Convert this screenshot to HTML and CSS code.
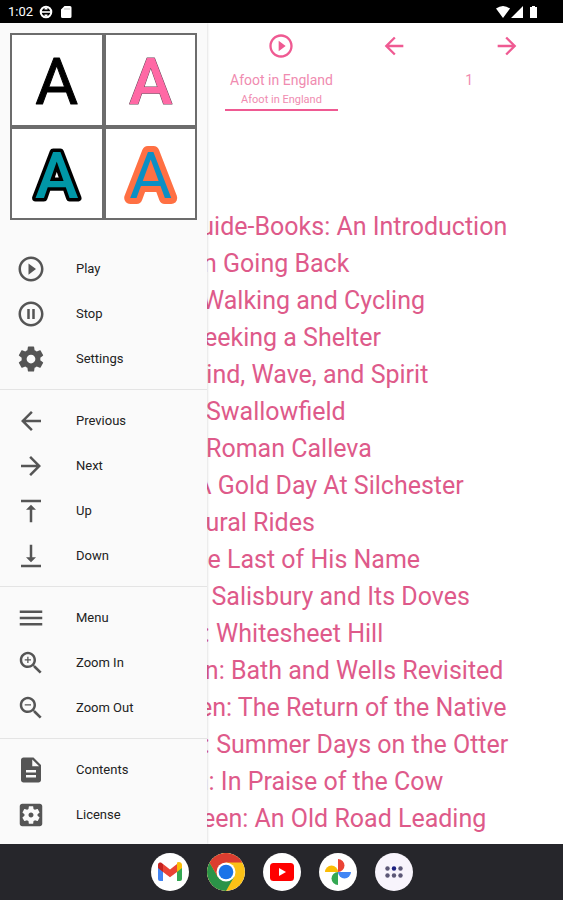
FILE: index.html
```html
<!DOCTYPE html>
<html lang="en">

  <head>
    <meta charset="utf-8">
    <meta name="viewport" content="width=device-width, initial-scale=1">
    <title>Afoot in England</title>
    <link rel="stylesheet" href="styles.css">
  </head>

  <body>
    <header class="status">
      <span class="time">1:02</span>
      <svg class="status-icon" viewBox="0 0 14 14"><circle cx="7" cy="7" r="5.300" fill="none" stroke="#fff" stroke-width="2"/><path d="M2 7h10" stroke="#fff" stroke-width="1.600"/><path d="M5.500 2.500h3v2h-3zM5.500 9.500h3v2h-3z" fill="#fff"/></svg>
      <svg class="status-icon" viewBox="0 0 14 14"><path d="M5.500 1H11a1.500 1.500 0 0 1 1.500 1.500v9A1.500 1.500 0 0 1 11 13H3.500A1.500 1.500 0 0 1 2 11.500V4.500z" fill="#fff"/><path d="M6 3v2M8 3v2M10 3v2" stroke="#888" stroke-width=".6"/></svg>
      <svg class="signals" viewBox="0 0 44 14"><path d="M1 3.500q7-5 14 0L8 13zM16 13 28 1v12zM35 2h2V1h3v1h2v11h-7z" fill="#fff"/></svg>
    </header>

    <div class="app">
      <main class="reader">
        <div class="toolbar">
          <button class="tool play" type="button" aria-label="Play"><svg viewBox="0 0 24 24"><path d="M10 16.500l6-4.500-6-4.500v9zM12 2C6.480 2 2 6.480 2 12s4.480 10 10 10 10-4.480 10-10S17.520 2 12 2zm0 18c-4.410 0-8-3.590-8-8s3.590-8 8-8 8 3.590 8 8-3.590 8-8 8z"/></svg></button>
          <button class="tool" type="button" aria-label="Previous"><svg viewBox="0 0 24 24"><path d="M20 11H7.830l5.590-5.590L12 4l-8 8 8 8 1.410-1.410L7.830 13H20v-2z"/></svg></button>
          <button class="tool" type="button" aria-label="Next"><svg viewBox="0 0 24 24"><path d="M12 4l-1.410 1.410L16.170 11H4v2h12.170l-5.580 5.590L12 20l8-8z"/></svg></button>
        </div>
        <div class="place">
          <a class="book" href="#contents">
            <span class="book-title">Afoot in England</span>
            <span class="book-part">Afoot in England</span>
          </a>
          <span class="page">1</span>
        </div>

        <ul class="chapters" id="contents">
          <li><a href="#1">Chapter One: Guide-Books: An Introduction</a></li>
          <li><a href="#2">Chapter Two: On Going Back</a></li>
          <li><a href="#3">Chapter Three: Walking and Cycling</a></li>
          <li><a href="#4">Chapter Four: Seeking a Shelter</a></li>
          <li><a href="#5">Chapter Five: Wind, Wave, and Spirit</a></li>
          <li><a href="#6">Chapter Six: By Swallowfield</a></li>
          <li><a href="#7">Chapter Seven: Roman Calleva</a></li>
          <li><a href="#8">Chapter Eight: A Gold Day At Silchester</a></li>
          <li><a href="#9">Chapter Nine: Rural Rides</a></li>
          <li><a href="#10">Chapter Ten: The Last of His Name</a></li>
          <li><a href="#11">Chapter Eleven: Salisbury and Its Doves</a></li>
          <li><a href="#12">Chapter Twelve: Whitesheet Hill</a></li>
          <li><a href="#13">Chapter Thirteen: Bath and Wells Revisited</a></li>
          <li><a href="#14">Chapter Fourteen: The Return of the Native</a></li>
          <li><a href="#15">Chapter Fifteen: Summer Days on the Otter</a></li>
          <li><a href="#16">Chapter Sixteen: In Praise of the Cow</a></li>
          <li><a href="#17">Chapter Seventeen: An Old Road Leading</a></li>
        </ul>
      </main>

      <aside class="drawer">
        <div class="themes">
          <button class="theme" type="button" aria-label="Black text"><svg viewBox="0 0 90 90"><text class="letter plain" x="45" y="69">A</text></svg></button>
          <button class="theme" type="button" aria-label="Pink text"><svg viewBox="0 0 90 90"><text class="letter pink" x="45" y="69">A</text></svg></button>
          <button class="theme" type="button" aria-label="Teal text, black outline"><svg viewBox="0 0 90 90"><text class="letter teal" x="45" y="69">A</text></svg></button>
          <button class="theme" type="button" aria-label="Blue text, orange outline"><svg viewBox="0 0 90 90"><text class="letter orange" x="45" y="69">A</text></svg></button>
        </div>

        <nav>
          <div class="group">
            <button class="item" type="button"><svg viewBox="0 0 24 24"><path d="M10 16.500l6-4.500-6-4.500v9zM12 2C6.480 2 2 6.480 2 12s4.480 10 10 10 10-4.480 10-10S17.520 2 12 2zm0 18c-4.410 0-8-3.590-8-8s3.590-8 8-8 8 3.590 8 8-3.590 8-8 8z"/></svg>Play</button>
            <button class="item" type="button"><svg viewBox="0 0 24 24"><path d="M9 16h2V8H9v8zm3-14C6.480 2 2 6.480 2 12s4.480 10 10 10 10-4.480 10-10S17.520 2 12 2zm0 18c-4.410 0-8-3.590-8-8s3.590-8 8-8 8 3.590 8 8-3.590 8-8 8zm1-4h2V8h-2v8z"/></svg>Stop</button>
            <button class="item" type="button"><svg viewBox="0 0 24 24"><path d="M19.430 12.980c.04-.32.07-.64.07-.98s-.03-.66-.07-.98l2.110-1.650c.19-.15.24-.42.12-.64l-2-3.460c-.12-.22-.39-.3-.61-.22l-2.490 1c-.52-.4-1.080-.73-1.690-.98l-.38-2.650C14.460 2.180 14.250 2 14 2h-4c-.25 0-.46.18-.49.42l-.38 2.650c-.61.25-1.170.59-1.690.98l-2.490-1c-.23-.09-.49 0-.61.22l-2 3.460c-.13.22-.07.49.12.64l2.110 1.650c-.04.32-.07.65-.07.98s.03.66.07.98l-2.110 1.650c-.19.15-.24.42-.12.64l2 3.460c.12.22.39.3.61.22l2.490-1c.52.4 1.080.73 1.690.98l.38 2.650c.03.24.24.42.49.42h4c.25 0 .46-.18.49-.42l.38-2.650c.61-.25 1.170-.59 1.690-.98l2.490 1c.23.09.49 0 .61-.22l2-3.460c.12-.22.07-.49-.12-.64l-2.110-1.650zM12 15.500c-1.930 0-3.500-1.570-3.500-3.500s1.570-3.500 3.500-3.500 3.500 1.570 3.500 3.500-1.570 3.500-3.500 3.500z"/></svg>Settings</button>
          </div>
          <div class="group">
            <button class="item" type="button"><svg viewBox="0 0 24 24"><path d="M20 11H7.830l5.590-5.590L12 4l-8 8 8 8 1.410-1.410L7.830 13H20v-2z"/></svg>Previous</button>
            <button class="item" type="button"><svg viewBox="0 0 24 24"><path d="M12 4l-1.410 1.410L16.170 11H4v2h12.170l-5.580 5.590L12 20l8-8z"/></svg>Next</button>
            <button class="item" type="button"><svg viewBox="0 0 24 24"><path d="M8 11h3v10h2V11h3l-4-4-4 4zM4 3v2h16V3H4z"/></svg>Up</button>
            <button class="item" type="button"><svg viewBox="0 0 24 24"><path d="M16 13h-3V3h-2v10H8l4 4 4-4zM4 19v2h16v-2H4z"/></svg>Down</button>
          </div>
          <div class="group">
            <button class="item" type="button"><svg viewBox="0 0 24 24"><path d="M3 18h18v-2H3v2zm0-5h18v-2H3v2zm0-7v2h18V6H3z"/></svg>Menu</button>
            <button class="item" type="button"><svg viewBox="0 0 24 24"><path d="M15.500 14h-.79l-.28-.27C15.410 12.590 16 11.110 16 9.500 16 5.910 13.090 3 9.500 3S3 5.910 3 9.500 5.910 16 9.500 16c1.610 0 3.090-.59 4.230-1.570l.27.28v.79l5 4.990L20.490 19l-4.990-5zm-6 0C7.010 14 5 11.990 5 9.500S7.010 5 9.500 5 14 7.010 14 9.500 11.990 14 9.500 14zm2.500-4h-2v2H9v-2H7V9h2V7h1v2h2v1z"/></svg>Zoom In</button>
            <button class="item" type="button"><svg viewBox="0 0 24 24"><path d="M15.500 14h-.79l-.28-.27C15.410 12.590 16 11.110 16 9.500 16 5.910 13.090 3 9.500 3S3 5.910 3 9.500 5.910 16 9.500 16c1.610 0 3.090-.59 4.230-1.570l.27.28v.79l5 4.990L20.490 19l-4.990-5zm-6 0C7.010 14 5 11.990 5 9.500S7.010 5 9.500 5 14 7.010 14 9.500 11.990 14 9.500 14zM7 9h5v1H7z"/></svg>Zoom Out</button>
          </div>
          <div class="group">
            <button class="item" type="button"><svg viewBox="0 0 24 24"><path d="M14 2H6c-1.100 0-1.990.9-1.990 2L4 20c0 1.100.89 2 1.990 2H18c1.100 0 2-.9 2-2V8l-6-6zm2 16H8v-2h8v2zm0-4H8v-2h8v2zm-3-5V3.500L18.500 9H13z"/></svg>Contents</button>
            <button class="item" type="button"><svg viewBox="0 0 24 24"><path d="M12 10c-1.100 0-2 .9-2 2s.9 2 2 2 2-.9 2-2-.9-2-2-2zm7-7H5c-1.110 0-2 .9-2 2v14c0 1.100.89 2 2 2h14c1.110 0 2-.9 2-2V5c0-1.100-.89-2-2-2zm-1.750 9c0 .23-.02.46-.05.68l1.480 1.160c.13.11.17.3.08.45l-1.400 2.420c-.09.15-.27.21-.43.15l-1.740-.7c-.36.28-.76.51-1.180.69l-.26 1.850c-.03.17-.18.3-.35.3h-2.800c-.17 0-.32-.13-.35-.29l-.26-1.850c-.43-.18-.82-.41-1.180-.69l-1.740.7c-.16.06-.34 0-.43-.15l-1.400-2.420c-.09-.15-.05-.34.08-.45l1.480-1.160c-.03-.23-.05-.46-.05-.69s.02-.46.05-.68l-1.480-1.160c-.13-.11-.17-.3-.08-.45l1.400-2.420c.09-.15.27-.21.43-.15l1.740.7c.36-.28.76-.51 1.180-.69l.26-1.850c.03-.17.18-.3.35-.3h2.800c.17 0 .32.13.35.29l.26 1.850c.43.18.82.41 1.180.69l1.740-.7c.16-.06.34 0 .43.15l1.400 2.420c.09.15.05.34-.08.45l-1.480 1.160c.03.23.05.46.05.69z"/></svg>License</button>
          </div>
        </nav>
      </aside>
    </div>

    <footer class="shelf">
      <button class="launcher" type="button" aria-label="Gmail"><svg viewBox="0 0 38 38"><path d="M7 12v14a2 2 0 0 0 2 2h3V15z" fill="#4285f4"/><path d="M31 12v14a2 2 0 0 1-2 2h-3V15z" fill="#34a853"/><path d="M26 12v7l5-4v-3c0-2.500-3-4-5-2.400z" fill="#fbbc04"/><path d="M7 12v3l5 4v-8l-2-1.400C8 9 7 10 7 12z" fill="#c5221f"/><path d="m12 11 7 5.500 7-5.500v8l-7 5.300-7-5.300z" fill="#ea4335"/></svg></button>
      <button class="launcher" type="button" aria-label="Chrome"><svg viewBox="0 0 38 38"><circle cx="19" cy="19" r="19" fill="#fbc116"/><path d="M2.500 9.500A19 19 0 0 0 19 38l8.200-14.250L19 19l-8.200 4.750z" fill="#2b9348"/><path d="M2.500 9.500a19 19 0 0 1 33 0H19V19l-8.200 4.750z" fill="#db3d30"/><circle cx="19" cy="19" r="9.500" fill="#fff"/><circle cx="19" cy="19" r="7.300" fill="#1a73e8"/></svg></button>
      <button class="launcher" type="button" aria-label="YouTube"><svg viewBox="0 0 38 38"><rect x="7" y="10" width="24" height="18" rx="3.500" fill="#f00"/><path d="m16 15 7 4-7 4z" fill="#fff"/></svg></button>
      <button class="launcher" type="button" aria-label="Photos"><svg viewBox="0 0 38 38"><path d="M19 19V6a6.500 6.500 0 0 1 0 13z" fill="#ea4335"/><path d="M19 19h13a6.500 6.500 0 0 1-13 0z" fill="#4285f4"/><path d="M19 19v13a6.500 6.500 0 0 1 0-13z" fill="#34a853"/><path d="M19 19H6a6.500 6.500 0 0 1 13 0z" fill="#fbbc04"/></svg></button>
      <button class="launcher apps" type="button" aria-label="All apps"><svg viewBox="0 0 38 38"><g fill="#5c5776"><circle cx="12.500" cy="15.500" r="2.200"/><circle cx="19" cy="15.500" r="2.200" fill="#1c2080"/><circle cx="25.500" cy="15.500" r="2.200"/><circle cx="12.500" cy="22.500" r="2.200"/><circle cx="19" cy="22.500" r="2.200"/><circle cx="25.500" cy="22.500" r="2.200"/></g></svg></button>
    </footer>
  </body>

</html>
```
FILE: styles.css
```css
:root {
  --pink: #ef5a92;
  --text-pink: #de5a8a;
  --icon: #555;
  --line: #e4e4e4;
  --drawer: #fafafa;
}

* {
  box-sizing: border-box;
}

body {
  margin: 0;
  height: 100vh;
  display: flex;
  flex-direction: column;
  background: #fff;
  font-family: Roboto, "Liberation Sans", sans-serif;
}

button {
  border: 0;
  padding: 0;
  background: none;
  font: inherit;
  cursor: pointer;
}

a {
  color: inherit;
  text-decoration: none;
}

svg {
  display: block;
}

.status {
  flex: none;
  display: flex;
  align-items: center;
  gap: 6px;
  height: 23px;
  padding: 0 24px 0 8px;
  background: #000;
  color: #fff;
}

.time {
  font-size: 13px;
}

.status-icon {
  width: 14px;
  height: 14px;
}

.signals {
  width: 44px;
  height: 14px;
  margin-left: auto;
}

.app {
  position: relative;
  flex: 1;
  min-height: 0;
  overflow: hidden;
}

.toolbar {
  display: grid;
  grid-template-columns: repeat(5, 1fr);
  height: 46px;
}

.tool {
  display: flex;
  align-items: center;
  justify-content: center;
}

.play {
  grid-column: 3;
}

.tool svg {
  width: 28px;
  height: 28px;
  fill: var(--pink);
}

.place {
  display: grid;
  grid-template-columns: repeat(3, 1fr);
  justify-items: center;
  color: #f08bb0;
  font-size: 14px;
  line-height: 22px;
}

.book {
  grid-column: 2;
  width: 60%;
  display: flex;
  flex-direction: column;
  align-items: center;
  white-space: nowrap;
  border-bottom: 2px solid var(--pink);
}

.book-part {
  font-size: 11px;
  line-height: 18px;
}

.chapters {
  list-style: none;
  margin: 0;
  padding: 97px 0 0 33px;
  color: var(--text-pink);
  font-size: 25px;
  line-height: 37px;
  white-space: nowrap;
}

/* slides over the reader */
.drawer {
  position: absolute;
  top: 0;
  bottom: 0;
  left: 0;
  width: 207px;
  padding: 10px 10px 0;
  overflow: hidden auto;
  background: var(--drawer);
  box-shadow: 0 0 3px rgba(0, 0, 0, 0.2);
  scrollbar-width: none;
}

.themes {
  display: grid;
  grid-template-columns: 1fr 1fr;
  margin-bottom: 18px;
}

.theme {
  border: 2px solid #6c6c6c;
  background: #fff;
}

.letter {
  font-size: 66px;
  text-anchor: middle;
  paint-order: stroke;
  stroke-linejoin: round;
}

.plain {
  stroke: #000;
  stroke-width: 1px;
}

.pink {
  fill: #ff69a5;
  font-weight: 500;
  stroke: #6b4458;
  stroke-width: 1px;
}

.teal {
  fill: #0097a7;
  font-weight: 500;
  stroke: #000;
  stroke-width: 7px;
}

.orange {
  fill: #0b8fc4;
  stroke: #ff7043;
  stroke-width: 12px;
}

.group {
  margin: 0 -10px;
  padding: 8px 16px;
}

.group + .group {
  border-top: 1px solid var(--line);
}

.item {
  display: flex;
  align-items: center;
  gap: 30px;
  width: 100%;
  height: 45px;
  color: #222;
  font-size: 13px;
}

.item svg {
  width: 30px;
  height: 30px;
  fill: var(--icon);
}

.shelf {
  flex: none;
  display: flex;
  align-items: center;
  justify-content: center;
  gap: 18px;
  height: 56px;
  background: #26262b;
}

.launcher {
  width: 38px;
  height: 38px;
  overflow: hidden;
  border-radius: 50%;
  background: #fff;
}

.apps {
  background: #f8f4fc;
}
```
